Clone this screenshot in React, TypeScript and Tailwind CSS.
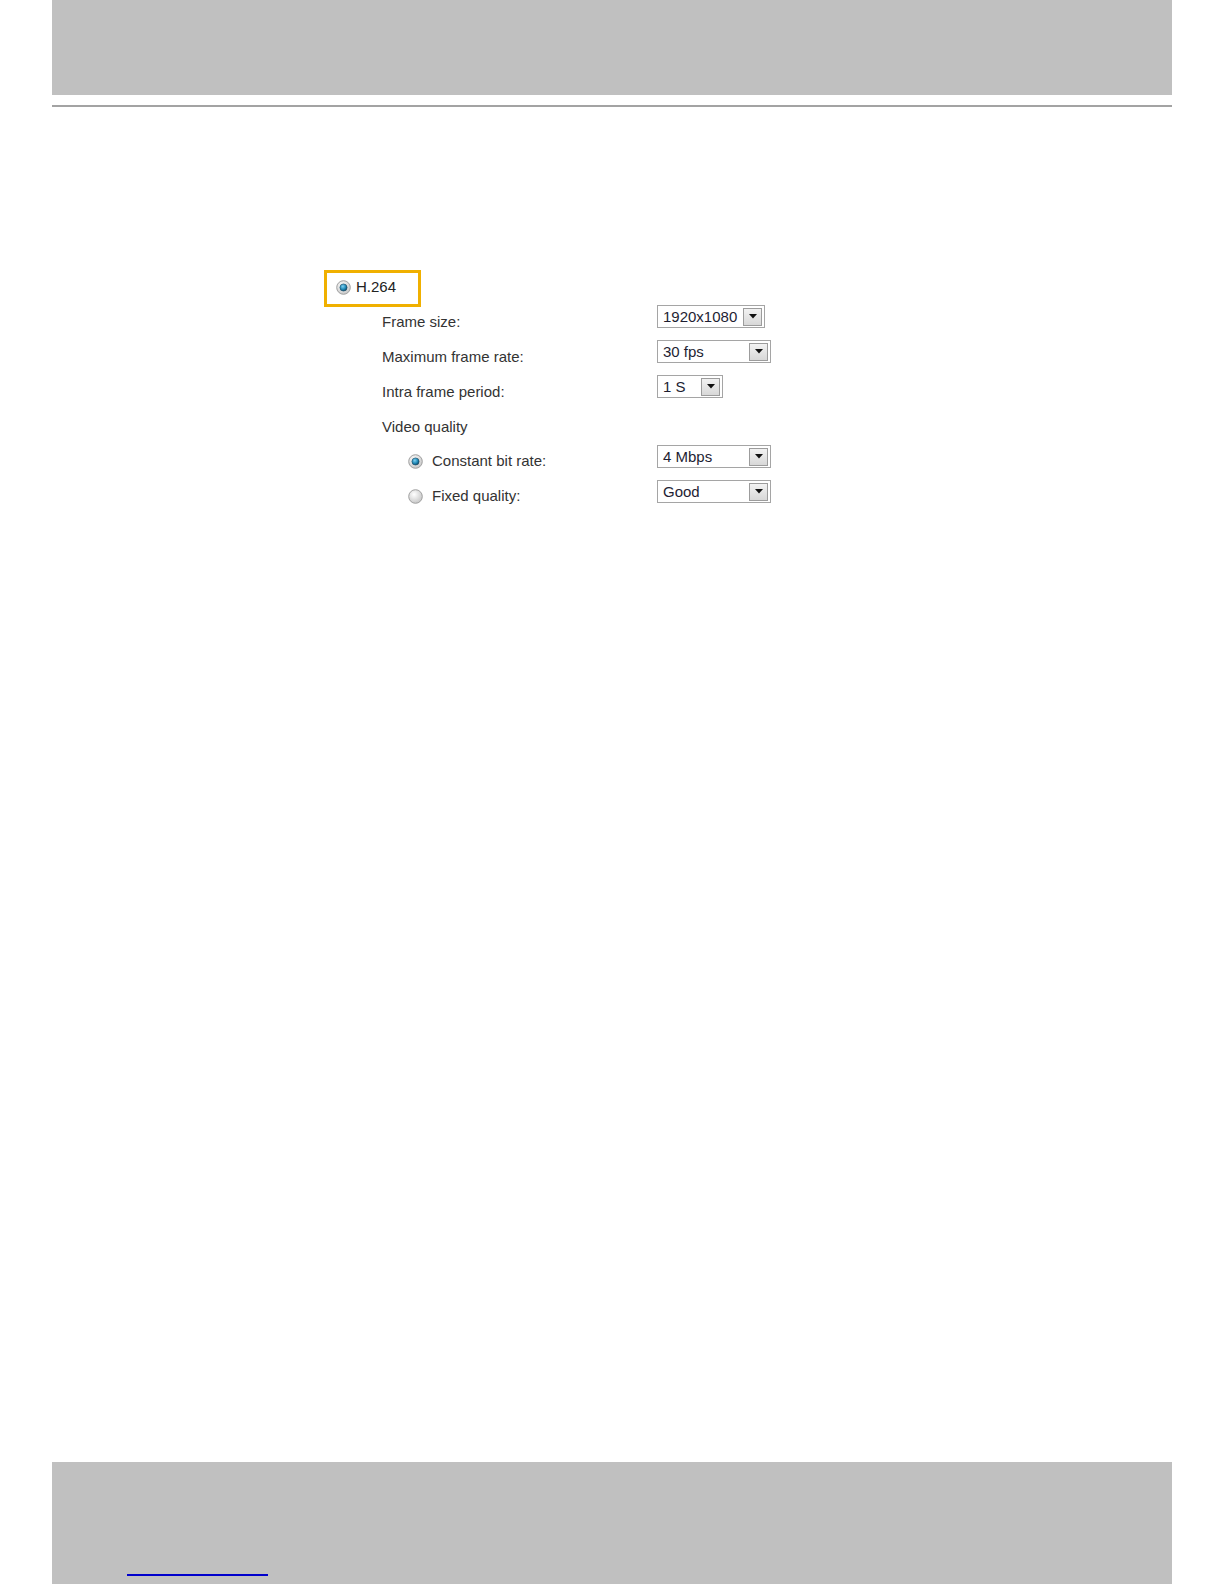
import React from 'react';

function Radio({ checked }: { checked?: boolean }) {
    return (
        <svg width="15" height="15" viewBox="0 0 15 15" className="shrink-0">
            <defs>
                <radialGradient id={checked ? 'rgOn' : 'rgOff'} cx="40%" cy="35%" r="70%">
                    <stop offset="0%" stopColor="#ffffff" />
                    <stop offset="100%" stopColor="#c4c4c4" />
                </radialGradient>
                <radialGradient id="dotGrad" cx="40%" cy="35%" r="70%">
                    <stop offset="0%" stopColor="#7fd0f0" />
                    <stop offset="60%" stopColor="#1d86b4" />
                    <stop offset="100%" stopColor="#0b3f5c" />
                </radialGradient>
            </defs>
            <circle cx="7.5" cy="7.5" r="6.8" fill={checked ? 'url(#rgOn)' : 'url(#rgOff)'} stroke="#a0a0a0" strokeWidth="1" />
            {checked && <circle cx="7.5" cy="7.5" r="3.6" fill="url(#dotGrad)" stroke="#1b4a63" strokeWidth="0.6" />}
        </svg>
    );
}

function Select({ value, width }: { value: string; width: string }) {
    return (
        <div className={`${width} mt-[1.5px] h-[23px] border border-[#a5a5a5] bg-white flex items-center justify-between pl-[5px] pr-[2px]`}>
            <span className="text-[15px] text-[#1e1e33] leading-none">{value}</span>
            <div className="w-[19px] h-[18px] border border-[#9c9c9c] bg-gradient-to-b from-[#f2f2f2] to-[#d8d8d8] flex items-center justify-center">
                <svg width="8" height="5" viewBox="0 0 8 5">
                    <path d="M0 0 H8 L4 4.5 Z" fill="#111" />
                </svg>
            </div>
        </div>
    );
}

const rows = [
    { label: 'Frame size:', value: '1920x1080', width: 'w-[108px]' },
    { label: 'Maximum frame rate:', value: '30 fps', width: 'w-[114px]' },
    { label: 'Intra frame period:', value: '1 S', width: 'w-[66px]' },
];

export default function App() {
    return (
        <div
            className="min-h-[1584px] flex flex-col bg-white text-[#333]"
            style={{ fontFamily: '"Liberation Sans", Arial, sans-serif' }}
        >
            {/* Header band */}
            <div className="mx-[52px] h-[95px] bg-[#c0c0c0]" />
            <div className="mx-[52px] mt-[10px] h-[2px] bg-[#a3a3a3]" />

            {/* Settings form */}
            <div className="pl-[324px] pt-[163px]">
                <div className="w-[97px] h-[37px] border-[3px] border-[#f0b000] flex items-center pl-[9px] pb-[3px] gap-[5px]">
                    <Radio checked />
                    <span className="text-[15px] text-[#222]">H.264</span>
                </div>

                <div className="-mt-[3.5px] pl-[58px] flex flex-col">
                    {rows.map((r) => (
                        <div key={r.label} className="h-[35px] flex items-start">
                            <span className="w-[275px] text-[15px] leading-[35px]">{r.label}</span>
                            <Select value={r.value} width={r.width} />
                        </div>
                    ))}
                    <div className="h-[35px] flex items-start">
                        <span className="text-[15px] leading-[35px]">Video quality</span>
                    </div>
                    <div className="h-[35px] flex items-start">
                        <div className="w-[275px] h-[35px] flex items-center pl-[26px] gap-[9px]">
                            <Radio checked />
                            <span className="text-[15px]">Constant bit rate:</span>
                        </div>
                        <Select value="4 Mbps" width="w-[114px]" />
                    </div>
                    <div className="h-[35px] flex items-start">
                        <div className="w-[275px] h-[35px] flex items-center pl-[26px] gap-[9px]">
                            <Radio />
                            <span className="text-[15px]">Fixed quality:</span>
                        </div>
                        <Select value="Good" width="w-[114px]" />
                    </div>
                </div>
            </div>

            {/* Footer band */}
            <div className="mt-auto mx-[52px] h-[122px] bg-[#c0c0c0] pt-[112px] pl-[75px]">
                <div className="w-[141px] h-[2px] bg-[#0000cc]" />
            </div>
        </div>
    );
}
